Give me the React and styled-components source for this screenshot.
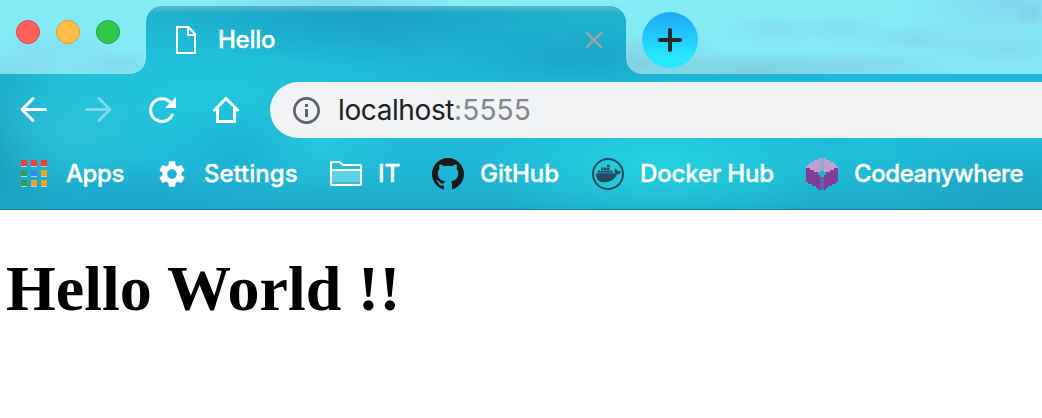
import React from 'react';
import styled, { createGlobalStyle } from 'styled-components';
import { MdSettings } from 'react-icons/md';
import { FaDocker } from 'react-icons/fa';

const GlobalStyle = createGlobalStyle`
  * { box-sizing: border-box; }
  body { margin: 0; background: #fff; overflow: hidden; }
`;

const frameTexture = `
  radial-gradient(ellipse 40px 20px at 38px 50px, rgba(125,204,234,.38), transparent),
  radial-gradient(ellipse 55px 18px at 115px 66px, rgba(130,200,230,.45), transparent),
  radial-gradient(ellipse 36px 16px at 82px 48px, rgba(125,208,236,.3), transparent),
  radial-gradient(ellipse 90px 20px at 10px 70px, rgba(130,205,230,.5), transparent),
  radial-gradient(ellipse 120px 12px at 330px 3px, rgba(128,204,238,.6), transparent),
  radial-gradient(ellipse 100px 30px at 640px 64px, rgba(132,194,218,.65), transparent),
  radial-gradient(ellipse 90px 18px at 750px 70px, rgba(125,192,208,.6), transparent),
  radial-gradient(ellipse 55px 16px at 775px 29px, rgba(130,208,234,.5), transparent),
  radial-gradient(ellipse 45px 16px at 842px 28px, rgba(130,208,236,.5), transparent),
  radial-gradient(ellipse 120px 20px at 850px 68px, rgba(130,204,232,.6), transparent),
  radial-gradient(ellipse 70px 16px at 915px 38px, rgba(130,206,234,.5), transparent),
  radial-gradient(ellipse 110px 40px at 1010px 4px, rgba(132,204,236,.65), transparent),
  radial-gradient(ellipse 18px 12px at 1030px 14px, rgba(125,185,216,.5), transparent),
  radial-gradient(ellipse 90px 18px at 1005px 48px, rgba(130,206,234,.5), transparent),
  linear-gradient(#83ecf5, #84e8f4)
`;

const Chrome = styled.header`
  height: 210px;
  border-bottom: 1px solid #14839a;
  background:
    radial-gradient(ellipse 210px 54px at 370px 12px, rgba(25,151,195,.65), transparent),
    radial-gradient(ellipse 130px 34px at 580px 56px, rgba(26,162,198,.8), transparent),
    radial-gradient(ellipse 90px 60px at 70px 130px, rgba(48,195,215,.8), transparent),
    radial-gradient(ellipse 80px 60px at 240px 155px, rgba(30,176,213,.8), transparent),
    radial-gradient(ellipse 90px 50px at 320px 145px, rgba(42,203,225,.7), transparent),
    radial-gradient(ellipse 190px 62px at 660px 164px, rgba(36,210,223,1), transparent),
    radial-gradient(ellipse 90px 60px at 870px 145px, rgba(31,192,217,.8), transparent),
    radial-gradient(ellipse 160px 60px at 1020px 200px, rgba(28,160,190,.7), transparent),
    radial-gradient(ellipse 170px 45px at 130px 210px, rgba(27,163,205,.75), transparent),
    radial-gradient(ellipse 240px 85px at 210px 98px, rgba(33,200,221,.95), transparent),
    radial-gradient(ellipse 80px 160px at 0px 160px, rgba(27,160,190,.95), transparent),
    linear-gradient(#1eb1cd, #1fb7d9 38%, #1fb8d8 75%, #1faccb);
`;

const TabStrip = styled.div`
  display: grid;
  grid-template-columns: 146px 480px 1fr;
  height: 74px;
`;

const FrameArea = styled.div`
  display: flex;
  align-items: flex-start;
  background: ${frameTexture};
  background-size: 1042px 74px;
  background-position: ${(p) => p.$offset || 0}px 0;
  border-radius: ${(p) => (p.$side === 'left' ? '0 0 16px 0' : '0 0 0 16px')};
  padding: ${(p) => (p.$side === 'left' ? '20px 0 0 16px' : '12px 0 0 16px')};
  gap: 16px;
`;

const Light = styled.span`
  width: 24px;
  height: 24px;
  border-radius: 50%;
  background: ${(p) => p.$fill};
  border: 1px solid ${(p) => p.$edge};
`;

const TabColumn = styled.div`
  display: grid;
  grid-template-rows: 6px 68px;
`;

const TabTop = styled.div`
  background: ${frameTexture};
  background-size: 1042px 74px;
  background-position: -146px 0;
`;

const Tab = styled.div`
  position: relative;
  display: flex;
  align-items: center;
  padding: 0 22px 0 29px;
  background: linear-gradient(rgba(125,185,190,.55) 0 2px, rgba(110,195,210,.4) 2px 4px, rgba(80,180,195,.15) 6px, transparent 9px);
  border-radius: 16px 16px 0 0;

  &::before, &::after {
    content: '';
    position: absolute;
    top: 0;
    width: 16px;
    height: 16px;
  }
  &::before {
    left: 0;
    background: radial-gradient(circle at 16px 16px, transparent 15.5px, #84eaf5 16.3px);
  }
  &::after {
    right: 0;
    background: radial-gradient(circle at 0 16px, transparent 15.5px, #84eaf5 16.3px);
  }
`;

const Label = styled.span`
  font: 500 24px/30px Inter, sans-serif;
  letter-spacing: ${(p) => p.$track || 0}px;
  color: #fff;
  -webkit-text-stroke: 0.35px #fff;
  white-space: nowrap;
`;

const TabTitle = styled(Label)`
  flex: 1;
  margin-left: 21px;
`;

const NewTab = styled.button`
  display: grid;
  place-items: center;
  width: 56px;
  height: 56px;
  padding: 0;
  border: 0;
  border-radius: 50%;
  background: linear-gradient(#20a7fa, #22d3fd 55%, #28e8ff 80%);
`;

const Toolbar = styled.div`
  display: flex;
  align-items: center;
  height: 64px;
  padding: 8px 0 0 18px;
`;

const NavButton = styled.span`
  flex: none;
  display: flex;
  width: 64px;
  opacity: ${(p) => (p.$disabled ? 0.4 : 1)};
`;

const AddressBar = styled.div`
  flex: 1;
  display: flex;
  align-items: center;
  height: 56px;
  margin-left: -4px;
  padding-left: 20px;
  border-radius: 28px 0 0 28px;
  background: #f1f3f4;
`;

const Address = styled.span`
  margin-left: 16px;
  font: 400 28px/36px Inter, sans-serif;
  letter-spacing: -0.4px;
  color: #202124;
`;

const Port = styled.span`
  color: #80868b;
  letter-spacing: 0.15px;
`;

const Bookmarks = styled.nav`
  display: flex;
  align-items: center;
  height: 71px;
  padding-left: 18px;
`;

const Bookmark = styled.div`
  flex: none;
  display: flex;
  align-items: center;
  gap: 16px;
  width: ${(p) => p.$width}px;
`;

const BookmarkIcon = styled.span`
  flex: none;
  display: grid;
  place-items: center;
  width: 32px;
  height: 32px;
  color: ${(p) => p.$color || '#fff'};
`;

const DockerBadge = styled.span`
  display: grid;
  place-items: center;
  width: 32px;
  height: 32px;
  border: 2px solid #244b62;
  border-radius: 50%;
`;

const Page = styled.main`
  padding: 42px 6px;
`;

const Heading = styled.h1`
  margin: 0;
  font: bold 64px/74px 'Liberation Serif', serif;
  word-spacing: 0.5px;
  color: #000;
`;

const Arrow = ({ flip }) => (
  <svg width="32" height="32" viewBox="0 0 32 32" fill="none" stroke="#fff" strokeWidth="3" strokeLinecap="round" strokeLinejoin="round">
    <path d={flip ? 'M4.5 15.5H27.5M17 4.5 28 15.5 17 26.5' : 'M27.5 15.5H4.5M15 4.5 4 15.5 15 26.5'} />
  </svg>
);

const Reload = () => (
  <svg width="32" height="32" viewBox="0 0 32 32">
    <path d="M26.8 19.8A11.4 11.4 0 1 1 25 9" fill="none" stroke="#fff" strokeWidth="3" />
    <path d="M30 3V14H19Z" fill="#fff" />
  </svg>
);

const Home = () => (
  <svg width="32" height="32" viewBox="0 0 32 32" fill="none" stroke="#fff" strokeWidth="3">
    <path d="M3.5 17 16 4.5 28.5 17M7.5 14V27.5H24.5V14" />
  </svg>
);

const Info = () => (
  <svg width="32" height="32" viewBox="0 0 32 32">
    <circle cx="16.5" cy="16.5" r="12.1" fill="none" stroke="#5f6368" strokeWidth="2.7" />
    <path d="M15 10h3v3h-3zM15 15h3v8h-3z" fill="#5f6368" />
  </svg>
);

const FileIcon = () => (
  <svg width="22" height="28" viewBox="0 0 22 28" fill="none" stroke="#fff" strokeWidth="2">
    <path d="M2 1H13.5L20 8V27H2ZM13 1V9H20" />
  </svg>
);

const appRows = [['#f93a37', '#f93a37', '#f93a37'], ['#369b59', '#2c8cf7', '#f5a124'], ['#369b59', '#f5a124', '#f5a124']];
const AppsIcon = () => (
  <svg width="32" height="32" shapeRendering="crispEdges">
    {appRows.map((row, y) => row.map((fill, x) => (
      <g key={`${x}-${y}`}>
        <rect x={3 + x * 10} y={2 + y * 10} width="6" height="6" fill={fill} />
        <rect x={3 + x * 10} y={8 + y * 10} width="6" height="1" fill="#a5dce7" />
      </g>
    )))}
  </svg>
);

const FolderIcon = () => (
  <svg width="32" height="32" viewBox="0 0 32 32">
    <path d="M1 12h30v12H1z" fill="#5dd3e6" />
    <path d="M1 24h30v2H1z" fill="#4cb4cd" />
    <path d="M1 26V5Q1 4 2 4H9.5L13 7H30Q31 7 31 8V26Q31 27 30 27H2Q1 27 1 26M1 12H31" fill="none" stroke="#fff" strokeWidth="2" />
  </svg>
);

const GithubIcon = () => (
  <svg width="32" height="32" viewBox="0 0 16 16" fill="currentColor">
    <path fillRule="evenodd" d="M8 0C3.58 0 0 3.58 0 8c0 3.54 2.29 6.53 5.47 7.59.4.07.55-.17.55-.38 0-.19-.01-.82-.01-1.49-2.01.37-2.53-.49-2.69-.94-.09-.23-.48-.94-.82-1.13-.28-.15-.68-.52-.01-.53.63-.01 1.08.58 1.23.82.72 1.21 1.87.87 2.33.66.07-.52.28-.87.51-1.07-1.78-.2-3.64-.89-3.64-3.95 0-.87.31-1.59.82-2.15-.08-.2-.36-1.02.08-2.12 0 0 .67-.21 2.2.82.64-.18 1.32-.27 2-.27s1.36.09 2 .27c1.53-1.04 2.2-.82 2.2-.82.44 1.1.16 1.92.08 2.12.51.56.82 1.27.82 2.15 0 3.07-1.87 3.75-3.65 3.95.29.25.54.73.54 1.48 0 1.07-.01 1.93-.01 2.2 0 .21.15.46.55.38A8.01 8.01 0 0 0 16 8c0-4.42-3.58-8-8-8z" />
  </svg>
);

const CubeIcon = () => (
  <svg width="32" height="32" viewBox="0 0 32 32" shapeRendering="crispEdges">
    <path d="M0 8H32V24H30V26H26V28H22V30H20V32H12V30H10V28H6V26H2V24H0z" fill="#813e98" />
    <path d="M12 0H20V2H24V4H28V6H30V8H32V10H28V12H24V14H20V16H12V14H8V12H4V10H0V8H2V6H4V4H8V2H12z" fill="#c09ed0" />
    <path d="M14 0h4v13h-4z" fill="#8eabd0" />
    <path d="M14 18h4v14h-4z" fill="#6461ac" />
    <path d="M14 13h4v1h2v3h-2v2h-4v-2h-2v-3h2z" fill="#28b0d0" />
  </svg>
);

const bookmarks = [
  { label: 'Apps', width: 138, icon: <AppsIcon />, track: -0.4 },
  { label: 'Settings', width: 174, icon: <MdSettings size={32} />, track: 0 },
  { label: 'IT', width: 102, icon: <FolderIcon />, track: 0 },
  { label: 'GitHub', width: 160, icon: <GithubIcon />, color: '#191919', track: -0.05 },
  { label: 'Docker Hub', width: 214, icon: <DockerBadge><FaDocker size={25} /></DockerBadge>, color: '#244b62', track: -0.15 },
  { label: 'Codeanywhere', width: 236, icon: <CubeIcon />, track: -0.42 },
];

export default function App() {
  return (
    <>
      <GlobalStyle />
      <Chrome>
        <TabStrip>
          <FrameArea $side="left">
            <Light $fill="#ff605c" $edge="#df4744" />
            <Light $fill="#ffbd44" $edge="#dc9e34" />
            <Light $fill="#34c84a" $edge="#20a638" />
          </FrameArea>
          <TabColumn>
            <TabTop />
            <Tab>
              <FileIcon />
              <TabTitle $track={-0.25}>Hello</TabTitle>
              <svg width="20" height="20" viewBox="0 0 20 20" stroke="#9aa3aa" strokeWidth="2.5" strokeLinecap="round">
                <path d="M3 3 17 17M17 3 3 17" />
              </svg>
            </Tab>
          </TabColumn>
          <FrameArea $side="right" $offset={-626}>
            <NewTab aria-label="New tab">
              <svg width="28" height="28" viewBox="0 0 28 28" stroke="#262a2e" strokeWidth="4" strokeLinecap="round">
                <path d="M14 4V24M4 14H24" />
              </svg>
            </NewTab>
          </FrameArea>
        </TabStrip>
        <Toolbar>
          <NavButton><Arrow /></NavButton>
          <NavButton $disabled><Arrow flip /></NavButton>
          <NavButton><Reload /></NavButton>
          <NavButton><Home /></NavButton>
          <AddressBar>
            <Info />
            <Address>localhost<Port>:5555</Port></Address>
          </AddressBar>
        </Toolbar>
        <Bookmarks>
          {bookmarks.map((b) => (
            <Bookmark key={b.label} $width={b.width}>
              <BookmarkIcon $color={b.color}>{b.icon}</BookmarkIcon>
              <Label $track={b.track}>{b.label}</Label>
            </Bookmark>
          ))}
        </Bookmarks>
      </Chrome>
      <Page>
        <Heading>Hello World !!</Heading>
      </Page>
    </>
  );
}
